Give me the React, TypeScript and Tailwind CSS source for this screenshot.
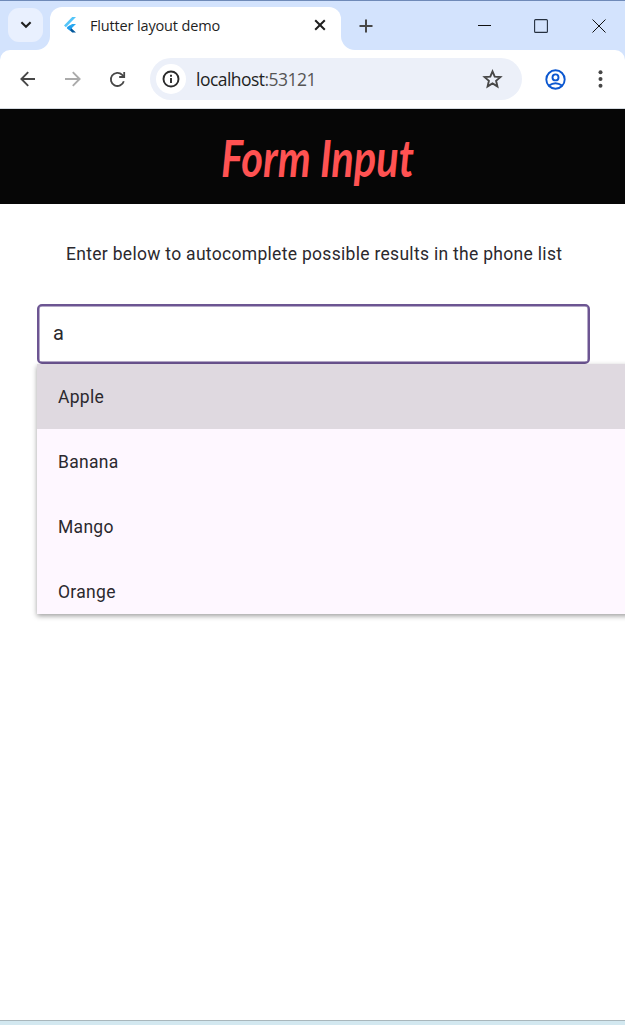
import React from "react";

const suggestions = ["Apple", "Banana", "Mango", "Orange"];

function FlutterIcon() {
  return (
    <svg width="12" height="16" viewBox="0 0 12 16">
      <path d="M0 8.4 8.2 0H12L1.9 10.3Z" fill="#54c5f8" />
      <path d="M8.2 7H12L7.6 11.3 5.7 13.2 2.7 10.3 3.9 9.4Z" fill="#29a8f0" />
      <path d="M5.7 9.4 9.2 12.9 12 15.6H8.2L3.8 11.3Z" fill="#01579b" />
      <path d="M2.8 11.2 5.7 8.4 8.2 10.9 5.7 13.4Z" fill="#1f9cee" />
    </svg>
  );
}

function TabStrip() {
  return (
    <div className="flex h-[50px] shrink-0 border-t border-[#6f8ab8] bg-[#d3e3fd]">
      <div className="w-[50px] bg-white">
        <div className="h-full w-full rounded-br-[14px] bg-[#d3e3fd] pl-2 pt-[7px]">
          <button className="flex h-[34px] w-[35px] items-center justify-center rounded-[11px] bg-[#e9f0fe]">
            <svg width="12" height="8" viewBox="0 0 12 8" fill="none" stroke="#1f1f1f" strokeWidth="2.1">
              <path d="M1.4 1.3 6 5.8 10.6 1.3" />
            </svg>
          </button>
        </div>
      </div>
      <div className="flex w-[291px] bg-[#d3e3fd] pt-[6px]">
        <div className="flex w-full items-center rounded-t-[12px] bg-white pb-[7px] pl-[14px] pr-[14px]">
          <FlutterIcon />
          <span className="ml-[14px] mt-[2px] w-[216px] whitespace-nowrap font-['Open_Sans','Noto_Sans',sans-serif] text-[14.5px] leading-5 tracking-[-0.15px] text-[#1f1f1f]">
            Flutter layout demo
          </span>
          <svg className="ml-[8px] shrink-0" width="12" height="12" viewBox="0 0 12 12" fill="none" stroke="#1f1f1f" strokeWidth="2">
            <path d="M1.2 1.2 10.8 10.8M10.8 1.2 1.2 10.8" />
          </svg>
        </div>
      </div>
      <div className="flex-1 bg-white">
        <div className="flex h-full items-center rounded-bl-[14px] bg-[#d3e3fd]">
          <svg className="ml-[18px]" width="14" height="14" viewBox="0 0 14 14" fill="none" stroke="#474747" strokeWidth="2">
            <path d="M7 .5v13M.5 7h13" />
          </svg>
          <svg className="ml-[105px]" width="13" height="13" viewBox="0 0 13 13" stroke="#111">
            <path d="M0 6.5h13" />
          </svg>
          <svg className="ml-[43px]" width="14" height="14" viewBox="0 0 14 14" fill="none" stroke="#25303f" strokeWidth="1.1">
            <rect x="0.6" y="0.6" width="12.8" height="12.8" rx="1" />
          </svg>
          <svg className="ml-[44px]" width="14" height="14" viewBox="0 0 14 14" fill="none" stroke="#111" strokeWidth="1">
            <path d="M.5.5 13.5 13.5M13.5.5.5 13.5" />
          </svg>
        </div>
      </div>
    </div>
  );
}

function Toolbar() {
  return (
    <div className="shrink-0 bg-[#d3e3fd]">
      <div className="flex h-[59px] items-center rounded-t-[10px] border-b border-[#d5dae0] bg-white pl-[20px]">
        <svg width="16" height="16" viewBox="0 0 16 16" fill="none" stroke="#474747" strokeWidth="1.9">
          <path d="M15 8H2M8.2 1.2 1.4 8 8.2 14.8" />
        </svg>
        <svg className="ml-[29px]" width="16" height="16" viewBox="0 0 16 16" fill="none" stroke="#ababab" strokeWidth="1.9">
          <path d="M0 8h14M7.8 1.2 14.6 8 7.8 14.8" />
        </svg>
        <svg className="ml-[28px]" width="17" height="17" viewBox="0 0 17 17" fill="none" stroke="#474747" strokeWidth="1.8">
          <path d="M14.8 10.2A6.6 6.6 0 1 1 13.2 3.8L14.8 5.6" />
          <path d="M15.2 1V6H10.2" />
        </svg>
        <div className="ml-[24px] flex h-[42px] w-[372px] items-center rounded-full bg-[#ecf0f9] pl-[6px]">
          <div className="flex size-[30px] items-center justify-center rounded-full bg-white">
            <svg width="18" height="18" viewBox="0 0 18 18" fill="none" stroke="#2b2b2b" strokeWidth="1.9">
              <circle cx="9" cy="9" r="7.5" />
              <path d="M9 8v5M9 4.8v2" />
            </svg>
          </div>
          <span className="ml-[10px] w-[286px] whitespace-nowrap font-['Open_Sans','Noto_Sans',sans-serif] text-[17.5px] leading-6 tracking-[-0.53px] text-[#1f1f1f]">
            localhost<span className="text-[#555]">:53121</span>
          </span>
          <svg width="21" height="20" viewBox="0 0 20 20" fill="none" stroke="#474747" strokeWidth="1.9">
            <path d="m10 2.4 2.2 5.2 5.7.5-4.3 3.7 1.3 5.6-4.9-3-4.9 3 1.3-5.6L2.1 8.1l5.7-.5Z" />
          </svg>
        </div>
        <svg className="ml-[23px]" width="21" height="21" viewBox="0 0 21 21" fill="none" stroke="#0b57d0" strokeWidth="1.9">
          <circle cx="10.5" cy="10.5" r="9.2" />
          <circle cx="10.5" cy="8.4" r="3" />
          <path d="M4 16.6Q10.5 11.8 17 16.6" />
        </svg>
        <svg className="ml-[32px]" width="5" height="18" viewBox="0 0 5 18" fill="#474747">
          <circle cx="2.5" cy="2.2" r="2" />
          <circle cx="2.5" cy="9" r="2" />
          <circle cx="2.5" cy="15.8" r="2" />
        </svg>
      </div>
    </div>
  );
}

export default function App() {
  return (
    <div className="flex h-[1025px] w-[625px] flex-col overflow-hidden bg-white font-[Roboto,sans-serif]">
      <TabStrip />
      <Toolbar />
      <header className="flex h-[95px] shrink-0 justify-center bg-[#060606] pl-[11px] pt-[18px]">
        <h1 className="origin-center scale-x-[0.8] whitespace-nowrap font-['Lato',cursive] text-[52px] font-bold italic leading-[60px] text-[#ff5252]">
          Form Input
        </h1>
      </header>
      <main className="flex min-h-0 flex-1 flex-col">
        <p className="mt-[38px] whitespace-nowrap pl-[66px] text-[17.5px] leading-[25px] tracking-[0.3px] text-[#2b292e]">
          Enter below to autocomplete possible results in the phone list
        </p>
        <input
          className="ml-[37px] mt-[37px] h-[60px] w-[553px] shrink-0 rounded-[5px] border-2 border-[#6c5592] bg-white px-[14px] pb-[2px] text-[20px] tracking-[0.6px] text-[#2b292e] shadow-[inset_0_0_0_0.5px_#6c5592] outline-none"
          defaultValue="a"
        />
        <ul className="ml-[37px] h-[250px] w-[640px] shrink-0 overflow-hidden bg-[#fef7ff] shadow-[0_2px_5px_rgba(0,0,0,0.38)]">
          {suggestions.map((name, index) => (
            <li
              key={name}
              className={`flex h-[65px] items-center pl-[21px] pt-[2px] text-[17.5px] tracking-[0.3px] text-[#2b292e] ${index === 0 ? "bg-[#dfd9e0]" : ""}`}
            >
              {name}
            </li>
          ))}
        </ul>
      </main>
      <footer className="h-[5px] shrink-0 border-t border-[#a9b6bb] bg-[#d3e8f0]" />
    </div>
  );
}
